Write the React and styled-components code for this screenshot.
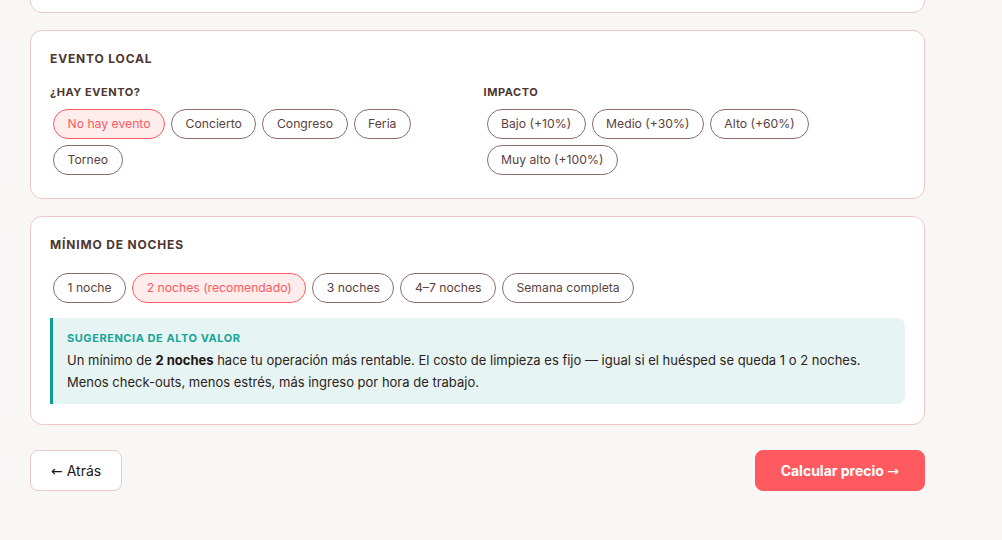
import React, { useState } from "react";
import styled, { createGlobalStyle } from "styled-components";

const Global = createGlobalStyle`
  html, body { margin: 0; padding: 0; background: #f9f7f5; overflow: hidden; }
  body { font-family: Inter, "Noto Sans", sans-serif; color: #3b2a27; }
  * { box-sizing: border-box; }
`;

const Page = styled.div`
  width: 895px;
  margin-left: 30px;
  display: flex;
  flex-direction: column;
  gap: 17px;
`;

const Card = styled.section`
  background: #fff;
  border: 1px solid #ecc9c6;
  border-radius: 12px;
  padding: 19px 19px 20px;
`;

const CutCard = styled(Card)`
  height: 40px;
  margin-top: -28px;
`;

const Title = styled.h2`
  margin: 0 0 16px;
  font-size: 12px;
  font-weight: 700;
  letter-spacing: 0.07em;
  color: #4c3631;
  line-height: 18px;
`;

const Cols = styled.div`
  display: grid;
  grid-template-columns: 1fr 1fr;
  column-gap: 12px;
`;

const Label = styled.div`
  font-size: 11px;
  font-weight: 700;
  letter-spacing: 0.05em;
  color: #4c3631;
  line-height: 16px;
  margin: 0 0 6px;
`;

const Chips = styled.div`
  display: flex;
  flex-wrap: wrap;
`;

const Chip = styled.button`
  margin: 3px;
  font-family: Inter, "Noto Sans", sans-serif;
  font-size: 12.2px;
  line-height: 16px;
  padding: 6px 13.5px;
  border-radius: 999px;
  border: 1px solid ${(p) => (p.$active ? "#ff5a5f" : "#8c6d68")};
  background: ${(p) => (p.$active ? "#ffeced" : "#fff")};
  color: ${(p) => (p.$active ? "#ff5a5f" : "#5a423e")};
  cursor: pointer;
`;

const Tip = styled.div`
  margin-top: 12px;
  background: #e6f5f3;
  border-left: 3px solid #0f9e8e;
  border-radius: 0 8px 8px 0;
  padding: 12px 14px 11px 14px;
`;

const TipTitle = styled.div`
  font-size: 11px;
  font-weight: 700;
  letter-spacing: 0.05em;
  color: #17a497;
  line-height: 16px;
  margin-bottom: 3px;
`;

const TipText = styled.p`
  margin: 0;
  font-size: 13px;
  line-height: 22px;
  color: #2e2220;
  b { font-weight: 700; color: #1e1614; }
`;

const Footer = styled.div`
  display: flex;
  justify-content: space-between;
  margin-top: 8px;
`;

const Btn = styled.button`
  height: 41px;
  font-family: Inter, "Noto Sans", sans-serif;
  font-size: 14px;
  border-radius: 8px;
  padding: 0 ${(p) => (p.$primary ? "25px" : "20px")};
  font-weight: ${(p) => (p.$primary ? 700 : 400)};
  border: 1px solid ${(p) => (p.$primary ? "#ff5a5f" : "#ecc9c6")};
  background: ${(p) => (p.$primary ? "#ff5a5f" : "#fff")};
  color: ${(p) => (p.$primary ? "#fff" : "#1e1614")};
  cursor: pointer;
`;

const Arrow = styled.span`
  font-family: "DejaVu Sans", sans-serif;
  font-weight: 400;
  font-size: 14px;
`;

const eventos = ["No hay evento", "Concierto", "Congreso", "Feria", "Torneo"];
const impactos = ["Bajo (+10%)", "Medio (+30%)", "Alto (+60%)", "Muy alto (+100%)"];
const noches = ["1 noche", "2 noches (recomendado)", "3 noches", "4–7 noches", "Semana completa"];

export default function App() {
  const [ev, setEv] = useState(0);
  const [imp, setImp] = useState(-1);
  const [n, setN] = useState(1);
  return (
    <>
      <Global />
      <Page>
        <CutCard />
        <Card>
          <Title>EVENTO LOCAL</Title>
          <Cols>
            <div>
              <Label>¿HAY EVENTO?</Label>
              <Chips>
                {eventos.map((e, i) => (
                  <Chip key={e} $active={i === ev} onClick={() => setEv(i)}>{e}</Chip>
                ))}
              </Chips>
            </div>
            <div>
              <Label>IMPACTO</Label>
              <Chips>
                {impactos.map((e, i) => (
                  <Chip key={e} $active={i === imp} onClick={() => setImp(i)}>{e}</Chip>
                ))}
              </Chips>
            </div>
          </Cols>
        </Card>
        <Card>
          <Title>MÍNIMO DE NOCHES</Title>
          <Chips>
            {noches.map((e, i) => (
              <Chip key={e} $active={i === n} onClick={() => setN(i)}>{e}</Chip>
            ))}
          </Chips>
          <Tip>
            <TipTitle>SUGERENCIA DE ALTO VALOR</TipTitle>
            <TipText>
              Un mínimo de <b>2 noches</b> hace tu operación más rentable. El costo de limpieza es fijo — igual si el huésped se queda 1 o 2 noches. Menos check-outs, menos estrés, más ingreso por hora de trabajo.
            </TipText>
          </Tip>
        </Card>
        <Footer>
          <Btn><Arrow>←</Arrow> Atrás</Btn>
          <Btn $primary>Calcular precio <Arrow>→</Arrow></Btn>
        </Footer>
      </Page>
    </>
  );
}
